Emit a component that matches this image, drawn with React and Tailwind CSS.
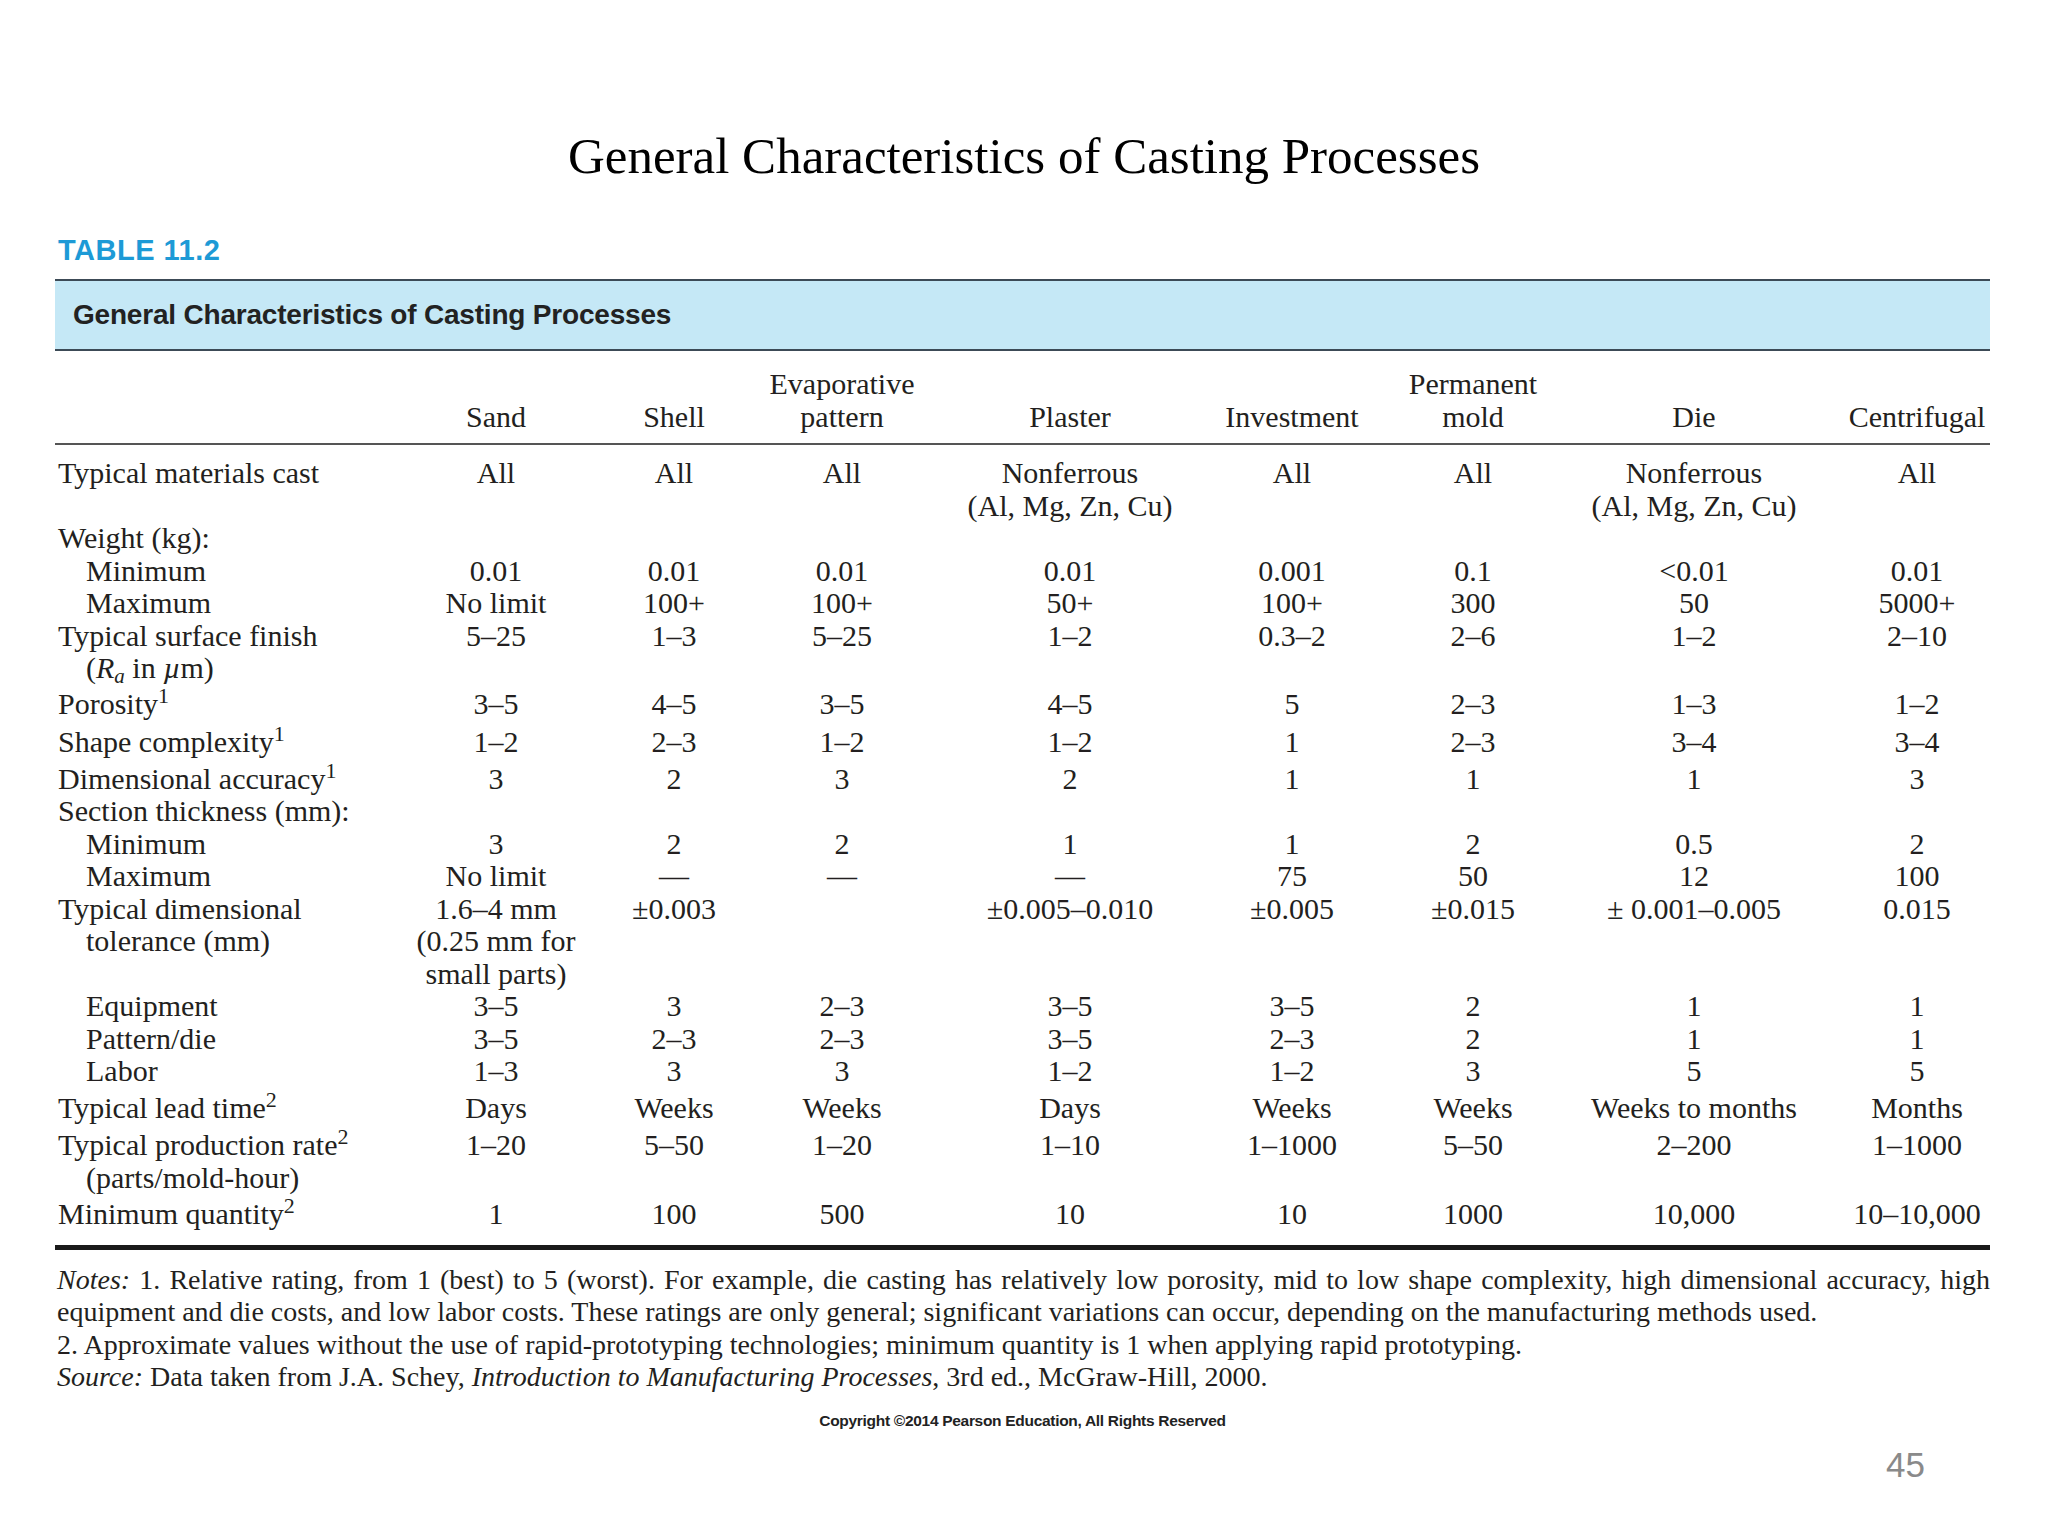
const cols =
  "grid grid-cols-[315px_252px_104px_232px_224px_220px_142px_300px_146px]";

const heads = [
  "Sand",
  "Shell",
  "Evaporative\npattern",
  "Plaster",
  "Investment",
  "Permanent\nmold",
  "Die",
  "Centrifugal",
];

const rows = [
  {
    label: "Typical materials cast",
    v: ["All", "All", "All", "Nonferrous\n(Al, Mg, Zn, Cu)", "All", "All", "Nonferrous\n(Al, Mg, Zn, Cu)", "All"],
  },
  { label: "Weight (kg):" },
  { label: "Minimum", indent: true, v: ["0.01", "0.01", "0.01", "0.01", "0.001", "0.1", "<0.01", "0.01"] },
  { label: "Maximum", indent: true, v: ["No limit", "100+", "100+", "50+", "100+", "300", "50", "5000+"] },
  {
    label: "Typical surface finish",
    sub: (
      <>
        (<i>R<sub className="text-[21px]">a</sub></i> in <i>µ</i>m)
      </>
    ),
    v: ["5–25", "1–3", "5–25", "1–2", "0.3–2", "2–6", "1–2", "2–10"],
  },
  {
    label: <>Porosity<sup className="text-[22px]">1</sup></>,
    pt: "pt-[3px]",
    v: ["3–5", "4–5", "3–5", "4–5", "5", "2–3", "1–3", "1–2"],
  },
  {
    label: <>Shape complexity<sup className="text-[22px]">1</sup></>,
    pt: "pt-[6px]",
    v: ["1–2", "2–3", "1–2", "1–2", "1", "2–3", "3–4", "3–4"],
  },
  {
    label: <>Dimensional accuracy<sup className="text-[22px]">1</sup></>,
    pt: "pt-[4px]",
    v: ["3", "2", "3", "2", "1", "1", "1", "3"],
  },
  { label: "Section thickness (mm):" },
  { label: "Minimum", indent: true, v: ["3", "2", "2", "1", "1", "2", "0.5", "2"] },
  { label: "Maximum", indent: true, v: ["No limit", "—", "—", "—", "75", "50", "12", "100"] },
  {
    label: "Typical dimensional",
    sub: "tolerance (mm)",
    v: ["1.6–4 mm\n(0.25 mm for\nsmall parts)", "±0.003", "", "±0.005–0.010", "±0.005", "±0.015", "± 0.001–0.005", "0.015"],
  },
  { label: "Equipment", indent: true, v: ["3–5", "3", "2–3", "3–5", "3–5", "2", "1", "1"] },
  { label: "Pattern/die", indent: true, v: ["3–5", "2–3", "2–3", "3–5", "2–3", "2", "1", "1"] },
  { label: "Labor", indent: true, v: ["1–3", "3", "3", "1–2", "1–2", "3", "5", "5"] },
  {
    label: <>Typical lead time<sup className="text-[22px]">2</sup></>,
    pt: "pt-[4px]",
    v: ["Days", "Weeks", "Weeks", "Days", "Weeks", "Weeks", "Weeks to months", "Months"],
  },
  {
    label: <>Typical production rate<sup className="text-[22px]">2</sup></>,
    sub: "(parts/mold-hour)",
    pt: "pt-[5px]",
    v: ["1–20", "5–50", "1–20", "1–10", "1–1000", "5–50", "2–200", "1–1000"],
  },
  {
    label: <>Minimum quantity<sup className="text-[22px]">2</sup></>,
    pt: "pt-[4px]",
    v: ["1", "100", "500", "10", "10", "1000", "10,000", "10–10,000"],
  },
];

function Row({ row }) {
  return (
    <div className={`${cols} ${row.pt || ""}`}>
      <div className={row.indent ? "pl-[31px]" : "pl-[3px]"}>
        <div>{row.label}</div>
        {row.sub && <div className="pl-[28px]">{row.sub}</div>}
      </div>
      {(row.v || ["", "", "", "", "", "", "", ""]).map((val, i) => (
        <div key={i} className="text-center whitespace-pre-line">
          {val}
        </div>
      ))}
    </div>
  );
}

export default function App() {
  return (
    <div className="w-[2048px] h-[1536px] bg-white text-[#231f20] font-['Liberation_Serif',serif] overflow-hidden">
      <h1 className="pt-[131px] text-center text-[51px] leading-[51px] text-black">
        General Characteristics of Casting Processes
      </h1>

      <div className="ml-[48px] w-[1952px] mt-[2px]">
        <div className="ml-[7px] w-[1935px] pt-[52px]">
          <div className="pl-[3px] text-[29px] leading-[29px] font-bold text-[#1d9ad6] font-['Liberation_Sans',sans-serif] tracking-[0.5px]">
            TABLE 11.2
          </div>

          <div className="mt-[14px] h-[72px] flex items-center border-y-2 border-[#3c4a56] bg-[#c5e8f6] pl-[18px]">
            <span className="text-[28px] font-bold text-[#222] font-['Liberation_Sans',sans-serif] tracking-[-0.2px]">
              General Characteristics of Casting Processes
            </span>
          </div>

          <div className="text-[30px] leading-[32.5px]">
            <div className={`${cols} items-end pt-[17px] pb-[10px] border-b-2 border-[#555]`}>
              <div />
              {heads.map((h) => (
                <div key={h} className="text-center whitespace-pre-line">
                  {h}
                </div>
              ))}
            </div>

            <div className="pt-[12px] pb-[14px]">
              {rows.map((r, i) => (
                <Row key={i} row={r} />
              ))}
            </div>

            <div className="h-[5px] bg-[#1a1a1a]" />
          </div>

          <div className="mt-[14px] pl-[2px] text-[28px] leading-[32.5px]">
            <p className="whitespace-nowrap text-justify [text-align-last:justify]">
              <i>Notes:</i> 1. Relative rating, from 1 (best) to 5 (worst). For example, die casting has relatively low
              porosity, mid to low shape complexity, high dimensional accuracy, high
            </p>
            <p>
              equipment and die costs, and low labor costs. These ratings are only general; significant variations can
              occur, depending on the manufacturing methods used.
            </p>
            <p>
              2. Approximate values without the use of rapid-prototyping technologies; minimum quantity is 1 when
              applying rapid prototyping.
            </p>
            <p>
              <i>Source:</i> Data taken from J.A. Schey, <i>Introduction to Manufacturing Processes</i>, 3rd ed.,
              McGraw-Hill, 2000.
            </p>
          </div>

          <div className="mt-[17px] text-center text-[15.5px] leading-[20px] font-bold text-[#222] font-['Liberation_Sans',sans-serif] tracking-[-0.3px]">
            Copyright ©2014 Pearson Education, All Rights Reserved
          </div>

          <div className="mt-[16px] flex justify-end pr-[65px]">
            <span className="text-[35px] leading-[35px] text-[#8a8a8a] font-['Liberation_Sans',sans-serif]">45</span>
          </div>
        </div>
      </div>
    </div>
  );
}
